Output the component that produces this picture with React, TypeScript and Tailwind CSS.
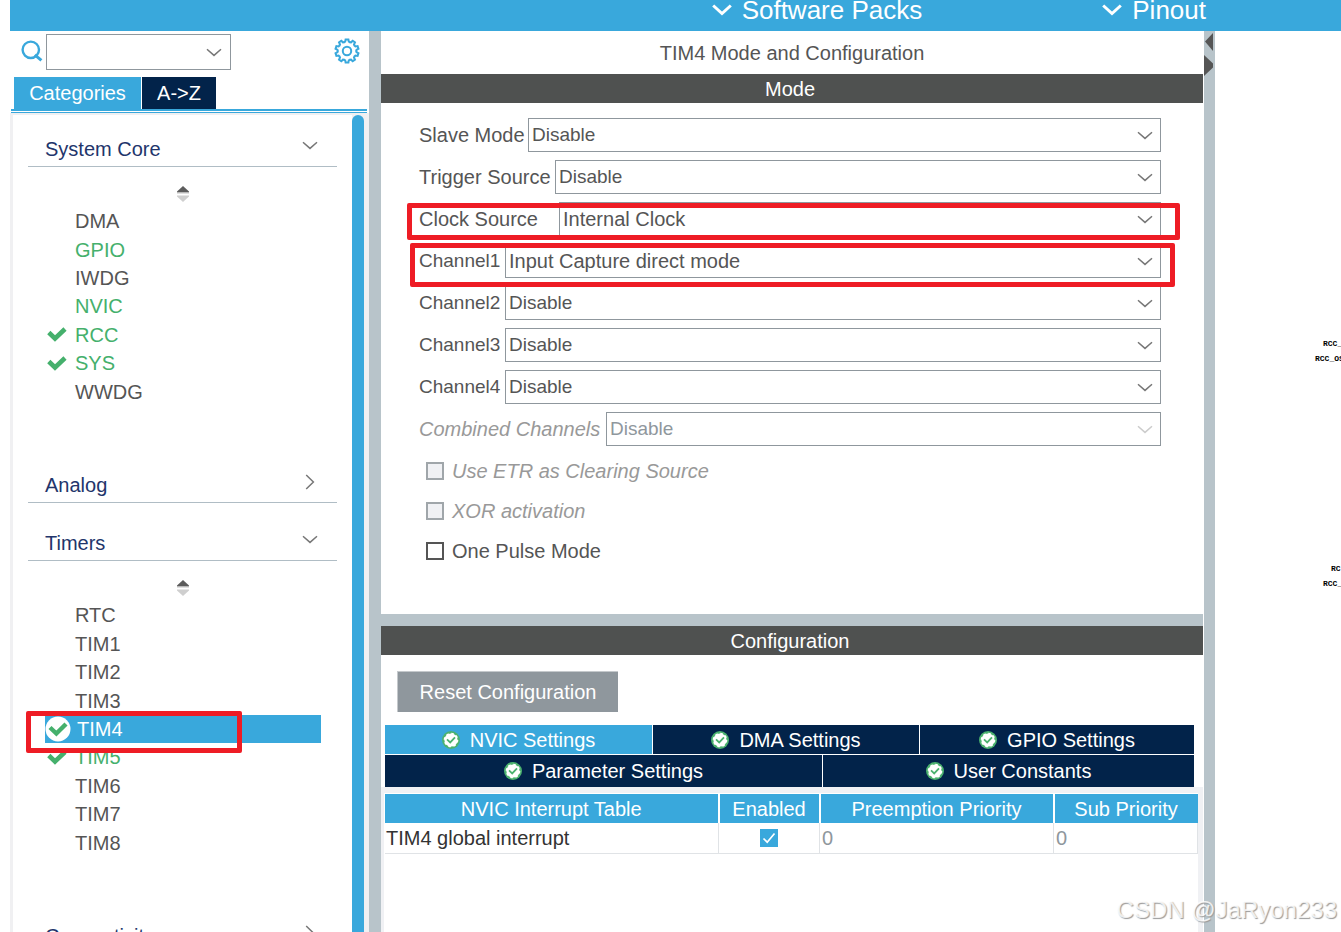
import { useState } from 'react';

const FONT = "font-['Liberation_Sans',Arial,sans-serif]";

interface ModeRow {
  id: string;
  label: string;
  value: string;
  labelWidth: string;
  labelSize?: string;
  valueSize?: string;
  disabled?: boolean;
  highlight?: string;
}

const modeRows: ModeRow[] = [
  { id: 'slave', label: 'Slave Mode', value: 'Disable', labelWidth: 'w-[109px]' },
  { id: 'trigger', label: 'Trigger Source', value: 'Disable', labelWidth: 'w-[136px]' },
  { id: 'clock', label: 'Clock Source', value: 'Internal Clock', labelWidth: 'w-[140px]', valueSize: 'text-[20px]', highlight: '-left-3 -right-[19px] top-px -bottom-1' },
  { id: 'ch1', label: 'Channel1', value: 'Input Capture direct mode', labelWidth: 'w-[86px]', labelSize: 'text-[19px]', valueSize: 'text-[20px]', highlight: '-left-[9px] -right-[14px] -top-px -bottom-[9px]' },
  { id: 'ch2', label: 'Channel2', value: 'Disable', labelWidth: 'w-[86px]', labelSize: 'text-[19px]' },
  { id: 'ch3', label: 'Channel3', value: 'Disable', labelWidth: 'w-[86px]', labelSize: 'text-[19px]' },
  { id: 'ch4', label: 'Channel4', value: 'Disable', labelWidth: 'w-[86px]', labelSize: 'text-[19px]' },
  { id: 'combined', label: 'Combined Channels', value: 'Disable', labelWidth: 'w-[187px]', disabled: true },
];

interface Peripheral {
  name: string;
  active?: boolean;
  checked?: boolean;
}

const systemCore: Peripheral[] = [
  { name: 'DMA' },
  { name: 'GPIO', active: true },
  { name: 'IWDG' },
  { name: 'NVIC', active: true },
  { name: 'RCC', active: true, checked: true },
  { name: 'SYS', active: true, checked: true },
  { name: 'WWDG' },
];

const timers: Peripheral[] = [
  { name: 'RTC' },
  { name: 'TIM1' },
  { name: 'TIM2' },
  { name: 'TIM3' },
  { name: 'TIM4', active: true, checked: true },
  { name: 'TIM5', active: true, checked: true },
  { name: 'TIM6' },
  { name: 'TIM7' },
  { name: 'TIM8' },
];

function ChevronDown({ className = '' }: { className?: string }) {
  return (
    <svg width="16" height="9" viewBox="0 0 16 9" fill="none" className={className} aria-hidden="true">
      <path d="M1 1.2 L8 7.4 L15 1.2" stroke="currentColor" strokeWidth="1.5" />
    </svg>
  );
}

function ChevronRight() {
  return (
    <svg width="10" height="16" viewBox="0 0 10 16" fill="none" aria-hidden="true">
      <path d="M1.2 1 L8.4 8 L1.2 15" stroke="currentColor" strokeWidth="1.5" />
    </svg>
  );
}

function MenuChevron() {
  return (
    <svg width="20" height="12" viewBox="0 0 20 12" fill="none" className="mt-1" aria-hidden="true">
      <path d="M1.2 1.5 L10 9.5 L18.8 1.5" stroke="white" strokeWidth="3" />
    </svg>
  );
}

function Tick() {
  return (
    <svg width="20" height="15" viewBox="0 0 20 15" fill="none" aria-hidden="true">
      <path d="M1.8 5.5 L8 11.5 L18 2" stroke="#45b06c" strokeWidth="4.6" />
    </svg>
  );
}

function CircledTick() {
  return (
    <svg width="26" height="26" viewBox="0 0 26 26" fill="none" aria-hidden="true">
      <circle cx="13" cy="13" r="12.5" fill="white" />
      <path d="M5 11.5 L11.4 17.5 L21 8" stroke="#45b06c" strokeWidth="4.4" />
    </svg>
  );
}

function StatusIcon() {
  return (
    <svg width="18" height="18" viewBox="0 0 18 18" fill="none" className="shrink-0" aria-hidden="true">
      <circle cx="9" cy="9" r="9" fill="#4cb26f" />
      <circle cx="9" cy="9" r="6.6" fill="white" />
      <circle cx="9" cy="9" r="6.6" stroke="white" strokeWidth="1.4" strokeDasharray="2.6 2.6" />
      <path d="M5 8.4 L8.2 11.4 L13 6.4" stroke="#4cb26f" strokeWidth="1.8" />
    </svg>
  );
}

function SearchIcon() {
  return (
    <svg width="22" height="22" viewBox="0 0 22 22" fill="none" aria-hidden="true">
      <circle cx="9.8" cy="9.8" r="8.2" stroke="#39a8dc" strokeWidth="2.4" />
      <path d="M13.8 14.8 L20.4 20.4" stroke="#39a8dc" strokeWidth="3" />
    </svg>
  );
}

function GearIcon() {
  const teeth = [0, 36, 72, 108, 144, 180, 216, 252, 288, 324];
  return (
    <svg width="26" height="26" viewBox="0 0 26 26" fill="none" stroke="#39a8dc" aria-hidden="true">
      {teeth.map((angle) => (
        <path
          key={angle}
          d="M9.8 4.4 L11.2 3.6 L11.6 1.4 H14.4 L14.8 3.6 L16.2 4.4"
          strokeWidth="2"
          transform={`rotate(${angle} 13 13)`}
        />
      ))}
      <circle cx="13" cy="13" r="4.2" strokeWidth="2" />
    </svg>
  );
}

function SortHandle() {
  return (
    <svg width="14" height="16" viewBox="0 0 14 16" className="mx-auto" aria-hidden="true">
      <path d="M7 0 L13 5.5 V6.5 H1 V5.5 Z" fill="#5c5c5c" />
      <rect x="1" y="6.5" width="12" height="1" fill="#c4c4c4" />
      <path d="M1 9.5 H13 V10.5 L7 16 L1 10.5 Z" fill="#cfcfcf" />
    </svg>
  );
}

function Highlight({ className }: { className: string }) {
  return <span className={`absolute z-10 border-[5px] border-[#ee1c25] rounded-[2px] pointer-events-none ${className}`} />;
}

interface SectionProps {
  title: string;
  open?: boolean;
  items?: Peripheral[];
  listHeight?: string;
  selected?: string;
  onSelect?: (name: string) => void;
}

function Section({ title, open = false, items = [], listHeight = '', selected, onSelect }: SectionProps) {
  return (
    <section className={open ? 'pb-[61px]' : 'pb-[22px]'}>
      <button className="w-full h-9 pl-[17px] pr-[19px] flex items-center justify-between border-b border-[#b0bdc5] text-[#22356b]">
        <span className="leading-6">{title}</span>
        <span className="mb-1.5 w-4 flex justify-center text-[#777]">{open ? <ChevronDown /> : <ChevronRight />}</span>
      </button>
      {open && (
        <>
          <div className="h-10 pt-[19px]">
            <SortHandle />
          </div>
          <ul className={`ml-[17px] mr-4 flex flex-col ${listHeight}`}>
            {items.map((item) => {
              const isSelected = item.name === selected;
              const color = isSelected ? 'bg-[#39a8dc] text-white' : item.active ? 'text-[#45b06c]' : 'text-[#555]';
              return (
                <li key={item.name} className="relative flex-1 min-h-0">
                  <button className={`w-full h-full flex items-center leading-6 ${color}`} onClick={() => onSelect?.(item.name)}>
                    <span className={`shrink-0 flex ${isSelected ? 'w-8' : 'w-[30px] pl-0.5'}`}>
                      {item.checked && (isSelected ? <CircledTick /> : <Tick />)}
                    </span>
                    {item.name}
                  </button>
                  {item.name === 'TIM4' && <Highlight className="-left-[19px] right-[79px] -top-1 -bottom-[10px]" />}
                </li>
              );
            })}
          </ul>
        </>
      )}
    </section>
  );
}

function Sidebar() {
  const [selected, setSelected] = useState('TIM4');

  return (
    <aside className="w-[359px] shrink-0 flex flex-col">
      <div className="h-[46px] pt-[3px] pl-[11px] pr-[9px] flex items-start">
        <span className="mt-1.5 mr-[3px]">
          <SearchIcon />
        </span>
        <div className="w-[185px] h-9 flex items-center border border-[#8f979d]">
          <input type="text" aria-label="Search peripherals" className="flex-1 min-w-0 h-full px-1 outline-none" />
          <button aria-label="Show matches" className="pr-2 text-[#777]">
            <ChevronDown />
          </button>
        </div>
        <button aria-label="Settings" className="ml-auto mt-1">
          <GearIcon />
        </button>
      </div>
      <div className="pl-1 flex gap-px text-white">
        <button className="h-8 w-[127px] bg-[#39a8dc]">Categories</button>
        <button className="h-8 w-[74px] bg-[#02234a]">A-&gt;Z</button>
      </div>
      <div className="ml-px mr-0.5 h-1 border-t-2 border-b border-[#39a8dc]" />
      <div className="flex-1 min-h-0 flex bg-[#f0f0f2] pt-0.5 pl-[3px] pr-[5px]">
        <div className="flex-1 overflow-hidden bg-white pt-4 pl-[15px] pr-[15px]">
          <Section title="System Core" open items={systemCore} listHeight="h-[199px]" selected={selected} onSelect={setSelected} />
          <Section title="Analog" />
          <Section title="Timers" open items={timers} listHeight="h-[256px]" selected={selected} onSelect={setSelected} />
          <Section title="Connectivity" />
        </div>
        <div className="w-3 rounded-t-full bg-[#39a8dc]" />
      </div>
    </aside>
  );
}

function ModeSelect({ row }: { row: ModeRow }) {
  return (
    <div className="relative h-[34px] flex items-center">
      <label
        htmlFor={row.id}
        className={`shrink-0 whitespace-nowrap ${row.labelWidth} ${row.labelSize ?? ''} ${row.disabled ? 'italic text-[#999]' : 'text-[#555]'}`}
      >
        {row.label}
      </label>
      <div className="relative flex-1 h-full">
        <select
          id={row.id}
          disabled={row.disabled}
          className={`appearance-none w-full h-full pl-[3px] pr-8 bg-white border border-[#8f979d] opacity-100 ${row.valueSize ?? 'text-[19px]'} ${row.disabled ? 'text-[#8f979d]' : 'text-[#555]'}`}
        >
          <option>{row.value}</option>
        </select>
        <ChevronDown className={`absolute right-2 top-[13px] pointer-events-none ${row.disabled ? 'text-[#ccc]' : 'text-[#777]'}`} />
      </div>
      {row.highlight && <Highlight className={row.highlight} />}
    </div>
  );
}

function ModeCheckbox({ label, disabled = false }: { label: string; disabled?: boolean }) {
  return (
    <label className={`h-10 flex items-center gap-2 ${disabled ? 'italic text-[#999]' : 'text-[#555]'}`}>
      <input
        type="checkbox"
        disabled={disabled}
        className={`appearance-none w-[18px] h-[18px] border-2 ${disabled ? 'border-[#a0a6aa] bg-[#f0f1f4]' : 'border-[#555] bg-white'}`}
      />
      {label}
    </label>
  );
}

function TabButton({ label, active = false }: { label: string; active?: boolean }) {
  return (
    <button className={`flex items-center justify-center gap-2.5 text-white ${active ? 'bg-[#39a8dc]' : 'bg-[#02234a]'}`}>
      <StatusIcon />
      {label}
    </button>
  );
}

function InterruptTable() {
  const [enabled, setEnabled] = useState(true);

  return (
    <table className="w-full table-fixed border-collapse">
      <colgroup>
        <col />
        <col className="w-[101px]" />
        <col className="w-[234px]" />
        <col className="w-[144px]" />
      </colgroup>
      <thead>
        <tr className="h-[29px] text-white leading-6">
          {['NVIC Interrupt Table', 'Enabled', 'Preemption Priority', 'Sub Priority'].map((head) => (
            <th key={head} className="p-0 font-normal bg-[#39a8dc] border-r-2 border-white last:border-r-0">
              {head}
            </th>
          ))}
        </tr>
      </thead>
      <tbody>
        <tr className="h-[30px] leading-6 text-[#8f979d]">
          <td className="p-0 pl-px border-r border-b border-[#e0e3e6] text-[#333]">TIM4 global interrupt</td>
          <td className="p-0 border-r border-b border-[#e0e3e6]">
            <label className="relative block w-[18px] h-[18px] mx-auto">
              <input
                type="checkbox"
                aria-label="Enable TIM4 global interrupt"
                checked={enabled}
                onChange={(e) => setEnabled(e.target.checked)}
                className="appearance-none block w-full h-full border border-[#39a8dc] checked:bg-[#39a8dc]"
              />
              {enabled && (
                <svg viewBox="0 0 18 18" fill="none" className="absolute inset-0 pointer-events-none" aria-hidden="true">
                  <path d="M3.5 9.5 L7.2 13.2 L14.5 4.5" stroke="white" strokeWidth="1.7" />
                </svg>
              )}
            </label>
          </td>
          <td className="p-0 pl-0.5 border-r border-b border-[#e0e3e6]">0</td>
          <td className="p-0 pl-0.5 border-r border-b border-[#e0e3e6]">0</td>
        </tr>
      </tbody>
    </table>
  );
}

function MainPanel() {
  return (
    <main className="flex-1 min-w-0 flex flex-col bg-white">
      <h1 className="h-[43px] flex items-center justify-center text-[#555]">TIM4 Mode and Configuration</h1>
      <h2 className="h-[29px] pr-1 flex items-center justify-center bg-[#4f5150] text-white">Mode</h2>
      <div className="pt-[15px] pl-[38px] pr-[42px] flex flex-col gap-2">
        {modeRows.map((row) => (
          <ModeSelect key={row.id} row={row} />
        ))}
      </div>
      <div className="pt-[5px] pb-[43px] pl-[45px]">
        <ModeCheckbox label="Use ETR as Clearing Source" disabled />
        <ModeCheckbox label="XOR activation" disabled />
        <ModeCheckbox label="One Pulse Mode" />
      </div>

      <div className="h-3 shrink-0 bg-[#b8c4ca]" />

      <h2 className="h-[29px] pr-1 shrink-0 flex items-center justify-center bg-[#4f5150] text-white">Configuration</h2>
      <div className="pt-4 pl-4 pb-[13px]">
        <button className="h-[41px] w-[221px] bg-[#8f979d] border-t border-l border-[#c5c9cc] text-white">Reset Configuration</button>
      </div>
      <div className="pl-1 pr-[9px] shrink-0">
        <div className="h-[30px] grid grid-cols-[267fr_266fr_274fr] gap-px pb-px">
          <TabButton label="NVIC Settings" active />
          <TabButton label="DMA Settings" />
          <TabButton label="GPIO Settings" />
        </div>
        <div className="h-8 grid grid-cols-[437fr_371fr] gap-px">
          <TabButton label="Parameter Settings" />
          <TabButton label="User Constants" />
        </div>
      </div>
      <div className="flex-1 min-h-0 pt-1.5 pl-[3px] pr-[5px] bg-[#f0f1f4]">
        <div className="h-full bg-white pt-px pl-px">
          <InterruptTable />
        </div>
      </div>
    </main>
  );
}

function PinoutCanvas() {
  return (
    <div className="relative w-[126px] shrink-0 overflow-hidden bg-white text-black font-['Liberation_Mono',monospace] text-[8px] leading-[8px] font-bold whitespace-nowrap">
      <span className="absolute left-[108px] top-[309px]">RCC_</span>
      <span className="absolute left-[100px] top-[324px]">RCC_OS</span>
      <span className="absolute left-[116px] top-[534px]">RC</span>
      <span className="absolute left-[108px] top-[549px]">RCC_</span>
    </div>
  );
}

export default function App() {
  return (
    <div className={`relative h-screen overflow-hidden flex flex-col bg-white pl-2.5 text-[20px] leading-6 ${FONT}`}>
      <header className="h-[31px] shrink-0 flex items-start justify-end gap-[180px] pr-[135px] bg-[#39a8dc] text-white text-[26px] leading-5">
        <button className="flex items-start gap-2.5">
          <MenuChevron />
          Software Packs
        </button>
        <button className="flex items-start gap-2.5">
          <MenuChevron />
          Pinout
        </button>
      </header>

      <div className="flex-1 min-h-0 flex">
        <Sidebar />
        <div className="w-3 shrink-0 bg-[#b8c4ca]" />
        <MainPanel />
        <div className="ml-px w-[11px] shrink-0 bg-[#b8c4ca]">
          <svg width="11" height="48" viewBox="0 0 11 48" fill="#555" aria-hidden="true">
            <path d="M9 2 V20 L1 10.5 Z" />
            <path d="M0 24 L9 32.5 V36.5 L0 45 Z" />
          </svg>
        </div>
        <PinoutCanvas />
      </div>

      <div className="absolute right-1 bottom-2 text-[24px] leading-7 text-white/80 [text-shadow:1px_1px_1px_#999] pointer-events-none">
        CSDN @JaRyon233
      </div>
    </div>
  );
}
